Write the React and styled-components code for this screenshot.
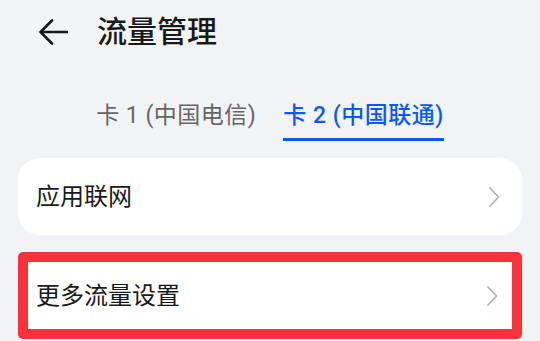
import React from 'react';
import styled, { createGlobalStyle } from 'styled-components';

const GlobalStyle = createGlobalStyle`
  html, body {
    margin: 0;
    padding: 0;
    background: #f1f3f5;
  }
  body {
    font-family: Roboto, "Noto Sans CJK SC", sans-serif;
    color: #191919;
  }
`;

const Page = styled.div`
  width: 540px;
  min-height: 341px;
  background: #f1f3f5;
`;

const Header = styled.header`
  height: 64px;
  display: flex;
  align-items: center;
  padding-left: 38px;
  gap: 29px;
`;

const BackButton = styled.button`
  border: none;
  background: none;
  padding: 0;
  display: flex;
  width: 30px;
  height: 26px;
  cursor: pointer;
`;

const Title = styled.h1`
  margin: 0;
  font-size: 30px;
  font-weight: 500;
  line-height: 40px;
  color: #191919;
`;

const TabBar = styled.nav`
  display: flex;
  justify-content: center;
  gap: 27px;
  padding-top: 37px;
`;

const Tab = styled.div`
  font-size: 23px;
  letter-spacing: 0.5px;
  line-height: 30px;
  padding-bottom: 7px;
  border-bottom: 3px solid ${p => (p.$active ? '#0a59f7' : 'transparent')};
  color: ${p => (p.$active ? '#0a59f7' : '#666666')};
  font-weight: ${p => (p.$active ? 500 : 400)};
  white-space: nowrap;
`;

const List = styled.div`
  display: flex;
  flex-direction: column;
  gap: 17px;
  padding: 17px 18px 0;
`;

const Card = styled.div`
  display: flex;
  align-items: center;
  justify-content: space-between;
  background: #ffffff;
  box-sizing: border-box;
  height: ${p => (p.$highlighted ? '87px' : '77px')};
  padding: ${p => (p.$highlighted ? '0 14px 0 8px' : '0 22px 0 18px')};
  border-radius: ${p => (p.$highlighted ? '5px' : '22px')};
  border: ${p => (p.$highlighted ? '10px solid #f6333a' : 'none')};
`;

const Label = styled.span`
  font-size: 24px;
  line-height: 32px;
  color: #191919;
`;

const Chevron = () => (
  <svg width="12" height="22" viewBox="0 0 12 22" fill="none">
    <path d="M2 2 L10.5 11 L2 20" stroke="#b4b4b4" strokeWidth="1.8" strokeLinecap="round" strokeLinejoin="round" />
  </svg>
);

const BackArrow = () => (
  <svg width="30" height="26" viewBox="0 0 30 26" fill="none">
    <path d="M29 13 H2.5 M14 1.5 L2.5 13 L14 24.5" stroke="#191919" strokeWidth="2.6" strokeLinecap="round" strokeLinejoin="round" />
  </svg>
);

const App = () => {
  return (
    <Page>
      <GlobalStyle />
      <Header>
        <BackButton aria-label="返回">
          <BackArrow />
        </BackButton>
        <Title>流量管理</Title>
      </Header>

      <TabBar>
        <Tab>卡 1 (中国电信)</Tab>
        <Tab $active>卡 2 (中国联通)</Tab>
      </TabBar>

      <List>
        <Card>
          <Label>应用联网</Label>
          <Chevron />
        </Card>
        <Card $highlighted>
          <Label>更多流量设置</Label>
          <Chevron />
        </Card>
      </List>
    </Page>
  );
};

export default App;
